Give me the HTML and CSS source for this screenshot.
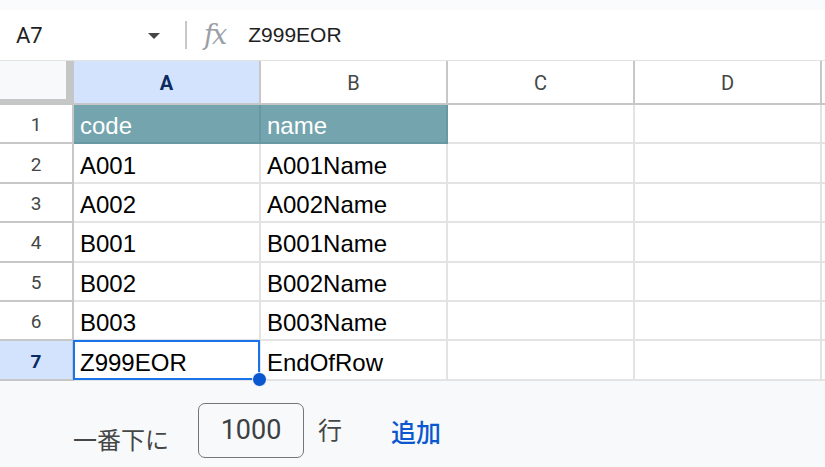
FILE: index.html
```html
<!DOCTYPE html>
<html>
<head>
  <title>Sheet</title>
  <link rel="stylesheet" href="styles.css">
</head>
<body>
  <div class="top-strip"></div>

  <!-- Formula bar -->
  <div class="formula-bar">
    <div class="name-box">A7</div>
    <svg class="caret" width="12" height="6" viewBox="0 0 12 6"><path d="M0 0h12L6 6z" fill="#444746"/></svg>
    <div class="divider"></div>
    <div class="fx">fx</div>
    <div class="formula-value">Z999EOR</div>
  </div>

  <!-- Grid -->
  <div class="sheet">
    <div class="corner"></div>
    <div class="col-head active">A</div>
    <div class="col-head">B</div>
    <div class="col-head">C</div>
    <div class="col-head">D</div>
    <div class="col-head edge"></div>

    <div class="row-head">1</div>
    <div class="cell title">code</div>
    <div class="cell title">name</div>
    <div class="cell"></div><div class="cell"></div><div class="cell edge"></div>

    <div class="row-head">2</div>
    <div class="cell">A001</div><div class="cell">A001Name</div>
    <div class="cell"></div><div class="cell"></div><div class="cell edge"></div>

    <div class="row-head">3</div>
    <div class="cell">A002</div><div class="cell">A002Name</div>
    <div class="cell"></div><div class="cell"></div><div class="cell edge"></div>

    <div class="row-head">4</div>
    <div class="cell">B001</div><div class="cell">B001Name</div>
    <div class="cell"></div><div class="cell"></div><div class="cell edge"></div>

    <div class="row-head">5</div>
    <div class="cell">B002</div><div class="cell">B002Name</div>
    <div class="cell"></div><div class="cell"></div><div class="cell edge"></div>

    <div class="row-head">6</div>
    <div class="cell">B003</div><div class="cell">B003Name</div>
    <div class="cell"></div><div class="cell"></div><div class="cell edge"></div>

    <div class="row-head active">7</div>
    <div class="cell selected">Z999EOR<span class="handle"></span></div>
    <div class="cell">EndOfRow</div>
    <div class="cell"></div><div class="cell"></div><div class="cell edge"></div>
  </div>

  <!-- Add rows -->
  <div class="add-rows">
    <span class="add-label">一番下に</span>
    <div class="row-count">1000</div>
    <span class="row-unit">行</span>
    <span class="add-btn">追加</span>
  </div>
</body>
</html>
```

FILE: styles.css
```css
* {
  box-sizing: border-box;
}

body {
  margin: 0;
  width: 825px;
  height: 467px;
  overflow: hidden;
  background: #f8f9fa;
  font-family: "Liberation Sans", Arial, sans-serif;
  color: #000;
}

.top-strip {
  height: 10px;
  background: #f9fbfd;
}

/* Formula bar */
.formula-bar {
  height: 51px;
  background: #fff;
  border-bottom: 1px solid #e1e3e1;
  display: flex;
  align-items: center;
  padding-left: 16px;
}

.name-box {
  width: 132px;
  font-family: Roboto, sans-serif;
  font-size: 22px;
  color: #1f1f1f;
}

.caret {
  margin-top: 2px;
}

.divider {
  width: 2px;
  height: 28px;
  background: #c7c7c7;
  margin-left: 25px;
}

.fx {
  font-family: "DejaVu Serif", "Liberation Serif", serif;
  font-style: italic;
  font-size: 27px;
  line-height: 27px;
  color: #9aa0a6;
  margin: 0 0 2px 17px;
  letter-spacing: -2px;
}

.formula-value {
  margin-left: 23px;
  font-family: "Liberation Sans", Arial, sans-serif;
  font-size: 21px;
  color: #1f1f1f;
}

/* Grid */
.sheet {
  display: grid;
  grid-template-columns: 74px 187px 187px 187px 187px 1fr;
  grid-template-rows: 44px repeat(7, 39.4px);
  background: #fff;
}

.corner {
  background: #f8f9fa;
  border-right: 8px solid #c4c7c5;
  border-bottom: 6px solid #c4c7c5;
}

.col-head {
  display: flex;
  align-items: center;
  justify-content: center;
  padding-top: 2px;
  font-family: Roboto, sans-serif;
  font-size: 20px;
  color: #444746;
  border-right: 2px solid #c7c7c7;
  border-bottom: 2px solid #c4c7c5;
}

.col-head.active,
.row-head.active {
  background: #d3e3fd;
  color: #0b2a5e;
  font-weight: bold;
}

.row-head {
  display: flex;
  align-items: center;
  justify-content: center;
  padding-top: 2px;
  font-family: Roboto, sans-serif;
  font-size: 19px;
  color: #444746;
  border-right: 2px solid #c7c7c7;
  border-bottom: 2px solid #c7c7c7;
}

.cell {
  position: relative;
  display: flex;
  align-items: center;
  padding: 5px 0 0 6px;
  font-size: 24px;
  border-right: 2px solid #e3e3e3;
  border-bottom: 2px solid #e3e3e3;
  white-space: nowrap;
}

.edge {
  border-right: none;
}

.cell.title {
  background: #74a4ae;
  color: #fff;
  border-color: #6a98a2;
}

/* Selected cell */
.cell.selected::after {
  content: "";
  position: absolute;
  top: -1px;
  left: -1px;
  right: -1px;
  bottom: -1px;
  border: 2px solid #1a73e8;
}

.handle {
  position: absolute;
  right: -8px;
  bottom: -8px;
  width: 15px;
  height: 15px;
  border-radius: 50%;
  background: #0b57d0;
  border: 1px solid #fff;
  z-index: 2;
}

/* Add rows */
.add-rows {
  display: flex;
  align-items: flex-start;
  padding: 22px 0 0 73px;
}

.add-label {
  font-family: "Noto Sans CJK JP", sans-serif;
  font-size: 24px;
  line-height: 24px;
  color: #444746;
  margin-top: 24px;
}

.row-count {
  width: 106px;
  height: 55px;
  margin-left: 29px;
  border: 1px solid #747775;
  border-radius: 7px;
  background: #f8f9fa;
  display: flex;
  align-items: center;
  justify-content: center;
  font-family: Roboto, sans-serif;
  font-size: 27px;
  color: #3c4043;
}

.row-unit {
  font-family: "Noto Sans CJK JP", sans-serif;
  font-size: 24px;
  line-height: 24px;
  color: #444746;
  margin: 14px 0 0 14px;
}

.add-btn {
  font-family: "Noto Sans CJK JP", sans-serif;
  font-size: 25px;
  line-height: 25px;
  font-weight: 500;
  color: #0b57d0;
  margin: 16px 0 0 49px;
}
```
